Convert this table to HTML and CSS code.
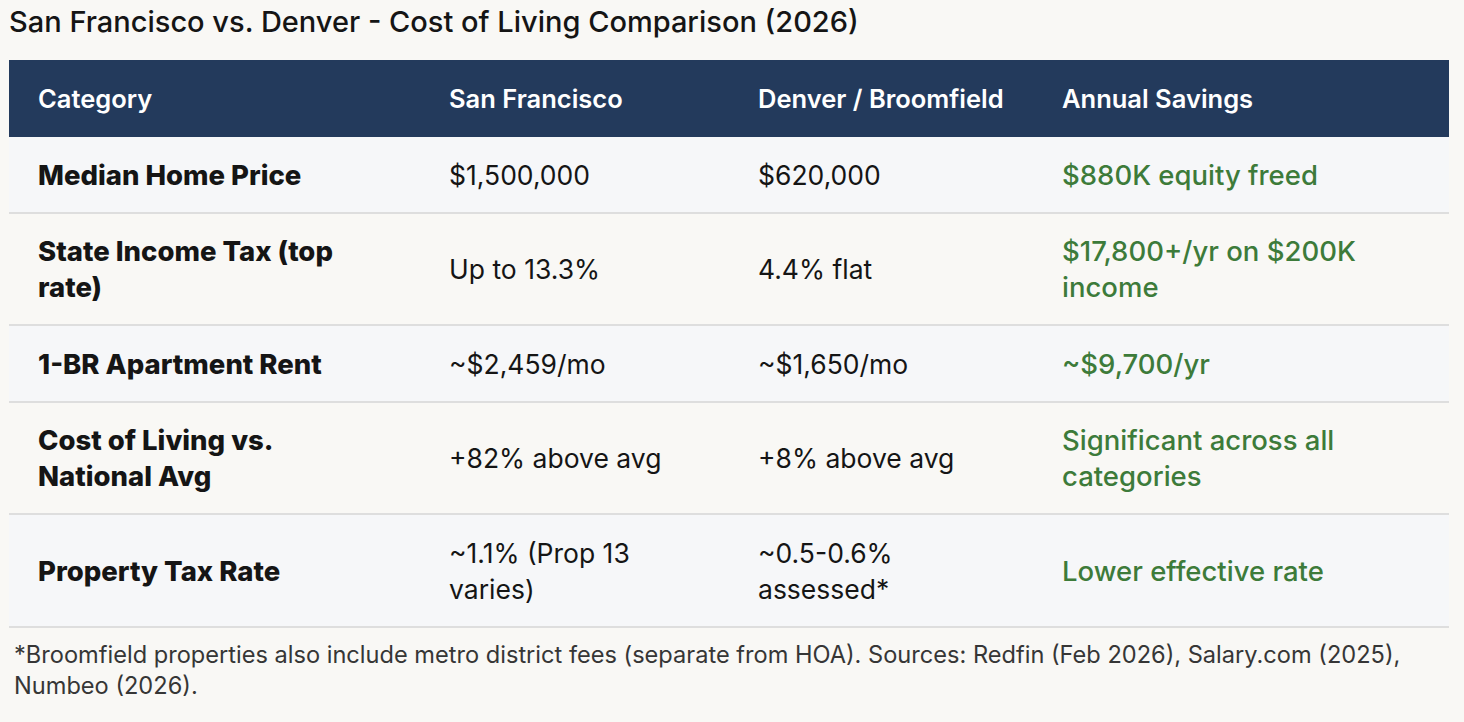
FILE: index.html
```html
<!DOCTYPE html>
<html lang="en">
<head>
<meta charset="utf-8">
<title>San Francisco vs. Denver - Cost of Living Comparison (2026)</title>
<link rel="stylesheet" href="styles.css">
</head>
<body>
<main class="page">
  <h2 class="title">San Francisco vs. Denver - Cost of Living Comparison (2026)</h2>
  <table class="compare">
    <colgroup>
      <col class="c1"><col class="c2"><col class="c3"><col class="c4">
    </colgroup>
    <thead>
      <tr>
        <th>Category</th>
        <th>San Francisco</th>
        <th>Denver / Broomfield</th>
        <th>Annual Savings</th>
      </tr>
    </thead>
    <tbody>
      <tr>
        <td class="cat">Median Home Price</td>
        <td>$1,500,000</td>
        <td>$620,000</td>
        <td class="save">$880K equity freed</td>
      </tr>
      <tr>
        <td class="cat">State Income Tax (top rate)</td>
        <td>Up to 13.3%</td>
        <td>4.4% flat</td>
        <td class="save">$17,800+/yr on $200K income</td>
      </tr>
      <tr>
        <td class="cat">1-BR Apartment Rent</td>
        <td>~$2,459/mo</td>
        <td>~$1,650/mo</td>
        <td class="save">~$9,700/yr</td>
      </tr>
      <tr>
        <td class="cat">Cost of Living vs. National Avg</td>
        <td>+82% above avg</td>
        <td>+8% above avg</td>
        <td class="save">Significant across all categories</td>
      </tr>
      <tr>
        <td class="cat">Property Tax Rate</td>
        <td>~1.1% (Prop 13 varies)</td>
        <td>~0.5-0.6% assessed*</td>
        <td class="save">Lower effective rate</td>
      </tr>
    </tbody>
  </table>
  <p class="note">*Broomfield properties also include metro district fees (separate from HOA). Sources: Redfin (Feb 2026), Salary.com (2025), Numbeo (2026).</p>
</main>
</body>
</html>
```

FILE: styles.css
```css
html, body {
  margin: 0;
  padding: 0;
  background: #f9f8f5;
}
body {
  font-family: Inter, "Noto Sans", "Liberation Sans", sans-serif;
  color: #151515;
}
.page {
  padding: 0 15px 0 9px;
}
.title {
  margin: 0;
  padding-top: 4px;
  height: 56px;
  font-size: 29px;
  font-weight: 500;
  line-height: 36px;
  color: #151515;
}
.compare {
  width: 1440px;
  border-collapse: collapse;
  table-layout: fixed;
}
.c1 { width: 411px; }
.c2 { width: 309px; }
.c3 { width: 304px; }
.c4 { width: 416px; }
.compare th {
  background: #233a5c;
  color: #ffffff;
  text-align: left;
  font-size: 25.5px;
  font-weight: 600;
  line-height: 33px;
  padding: 22px 29px;
}
.compare td {
  font-size: 26.5px;
  line-height: 36px;
  padding: 19.5px 35px 19px 29px;
  border-bottom: 2px solid #dedede;
  vertical-align: middle;
}
.compare tbody tr:nth-child(odd) td {
  background: #f6f7f9;
}
.compare tbody tr:nth-child(even) td {
  background: #f9f8f5;
}
.compare td.cat {
  font-weight: 800;
  font-size: 27.5px;
}
.compare td.save {
  color: #3d7b3a;
  font-weight: 500;
  font-size: 27.5px;
}
.note {
  margin: 11px 0 0 5px;
  font-size: 23.6px;
  line-height: 31px;
  color: #363636;
}
```
